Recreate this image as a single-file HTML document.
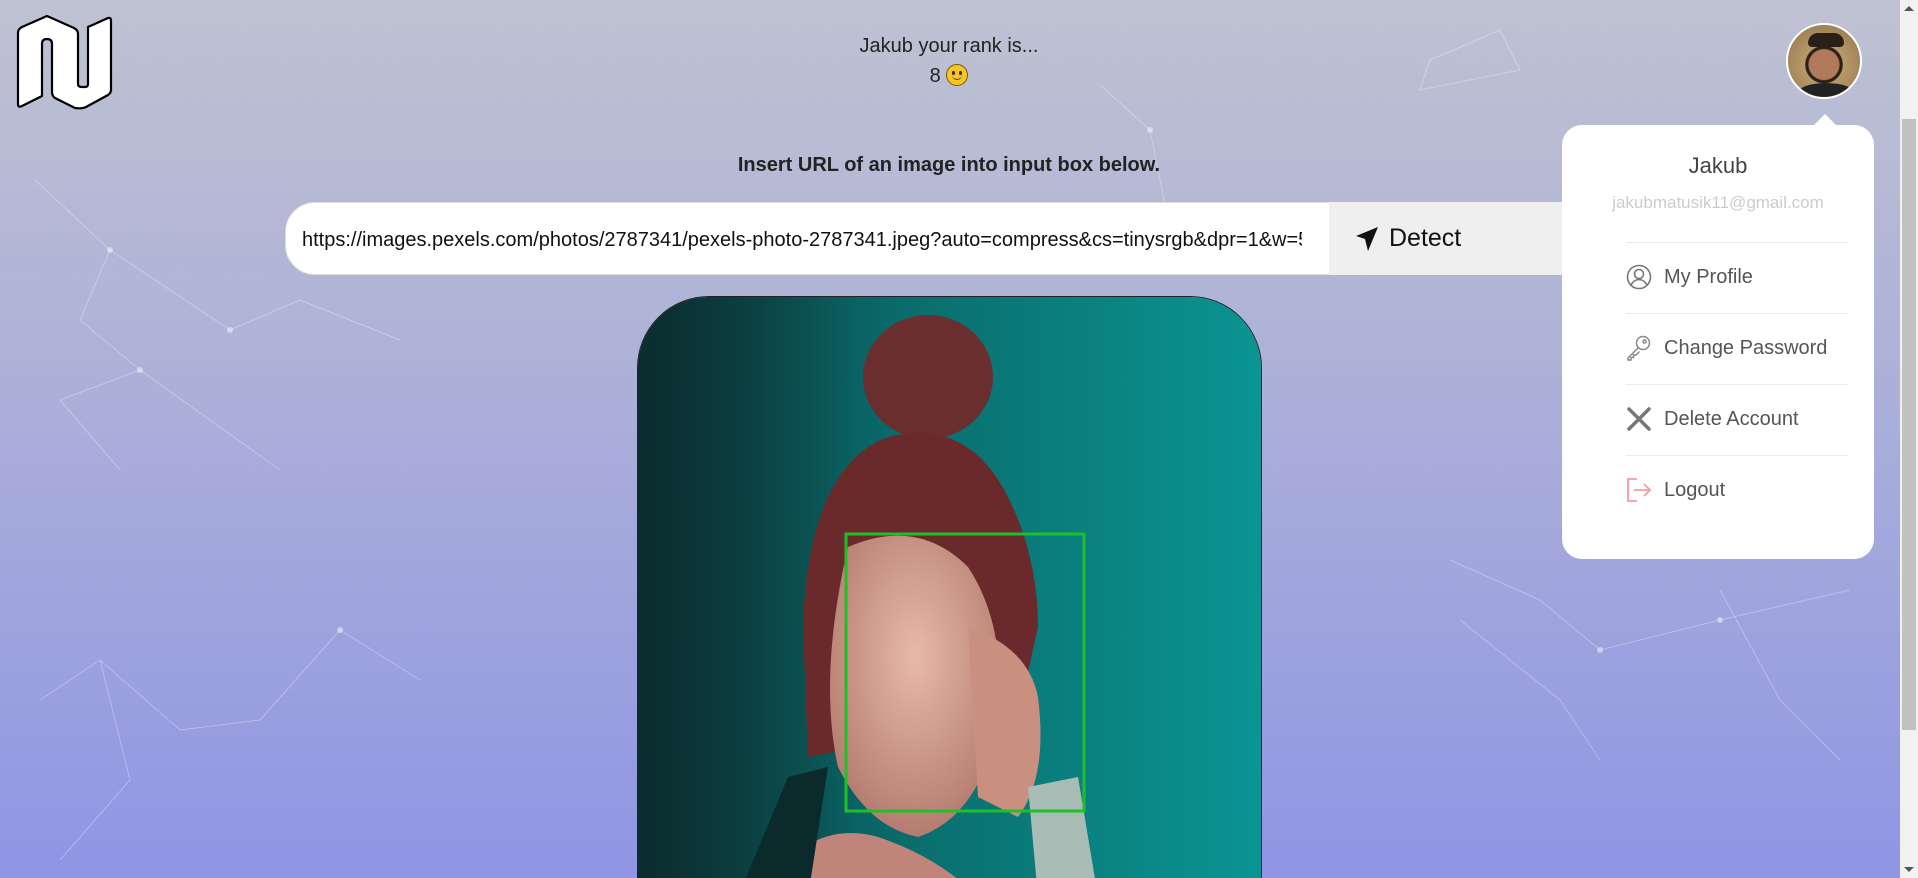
<!DOCTYPE html>
<html><head><meta charset="utf-8">
<style>
*{margin:0;padding:0;box-sizing:border-box}
html,body{width:1918px;height:878px;overflow:hidden}
body{font-family:"Liberation Sans",Arial,sans-serif;background:linear-gradient(180deg,#bec2d1 0%,#aeb2d8 40%,#8f95e4 100%);position:relative}
.abs{position:absolute}
.rank{left:0;width:1898px;text-align:center;color:#222;font-size:20px}
.hint{left:0;width:1898px;text-align:center;top:154px;font-weight:bold;font-size:20px;color:#222}
.input{left:285px;top:202px;width:1045px;height:73px;background:#fff;border-radius:30px 0 0 30px;font-size:20px;color:#111;border:1px solid #ddd}
.input div{position:absolute;left:16px;top:26px;width:1000px;white-space:nowrap;overflow:hidden}
.btn{left:1329px;top:202px;width:260px;height:73px;background:#efefef;font-size:25px;color:#111;padding:22px 0 0 60px}
.img{left:637px;top:296px;width:625px;height:600px;border-radius:72px 72px 0 0;overflow:hidden;border:1px solid #222}
.dd{left:1562px;top:125px;width:312px;height:434px;background:#fff;border-radius:20px}
.dd .name{position:absolute;top:28px;width:100%;text-align:center;font-size:22px;color:#444}
.dd .mail{position:absolute;top:68px;width:100%;text-align:center;font-size:17px;color:#ccc}
.line{position:absolute;left:64px;width:222px;height:1px;background:#eaeaea}
.item{position:absolute;left:64px;font-size:20px;color:#555;display:flex;align-items:center}
.item svg{margin-right:12px}
.sb{left:1900px;top:0;width:18px;height:878px;background:#f1f1f1}
.thumb{left:1902px;top:119px;width:14px;height:611px;background:#c1c1c1}
</style></head><body>
<svg class="abs" style="left:0;top:0" width="1900" height="878">
<g stroke="rgba(255,255,255,0.3)" stroke-width="1" fill="none">
<path d="M35 180L110 250L80 320L140 370L60 400M110 250L230 330L300 300L400 340M140 370L210 420L280 470M60 400L120 470M1430 60L1500 30L1520 70L1420 90ZM1100 85L1150 130L1170 230L1280 260M1450 560L1540 600L1600 650L1720 620L1850 590M1460 620L1560 700L1600 760M40 700L100 660L180 730L260 720L340 630L420 680M100 660L130 780L60 860M1720 590L1780 700L1840 760"/>
</g>
<g fill="rgba(255,255,255,0.45)"><circle cx="110" cy="250" r="3"/><circle cx="230" cy="330" r="3"/><circle cx="140" cy="370" r="3"/><circle cx="1150" cy="130" r="3"/><circle cx="340" cy="630" r="3"/><circle cx="1720" cy="620" r="3"/><circle cx="1600" cy="650" r="3"/></g>
</svg>
<svg class="abs" style="left:0;top:0" width="120" height="115" viewBox="0 0 120 115">
<path d="M18 104L18 33Q18 29 22 27L47 16L74 28Q78 30 78 34L78 84Q78 87 82 87L85 87Q88 87 88 84L88 27L108 18Q111 17 111 21L111 90Q111 93 108 95L86 107Q82 109 75 108L55 98Q52 96 52 92L52 44Q52 39 47 39Q42 39 42 44L42 96L22 106Q18 108 18 104Z" fill="#fff" stroke="#000" stroke-width="2.2" stroke-linejoin="round"/>
</svg>
<div class="abs rank" style="top:35px">Jakub your rank is...</div>
<div class="abs rank" style="top:64px">8 <span style="display:inline-block;width:22px;height:22px;border-radius:50%;background:#f7c325;border:1.5px solid #7a5a00;vertical-align:-4px;position:relative"><span style="position:absolute;left:5px;top:6px;width:3px;height:4px;background:#333;border-radius:2px"></span><span style="position:absolute;left:12px;top:6px;width:3px;height:4px;background:#333;border-radius:2px"></span><span style="position:absolute;left:5px;top:10px;width:10px;height:5px;border-bottom:1.5px solid #333;border-radius:0 0 6px 6px"></span></span></div>
<div class="abs hint">Insert URL of an image into input box below.</div>
<div class="abs input"><div>https://images.pexels.com/photos/2787341/pexels-photo-2787341.jpeg?auto=compress&amp;cs=tinysrgb&amp;dpr=1&amp;w=500</div></div>
<div class="abs btn"><svg class="abs" style="left:26px;top:24px" width="24" height="26" viewBox="0 0 24 26"><path d="M23 1L1 10L10 13L13 25Z" fill="#111"/></svg>Detect</div>
<div class="abs img">
<svg width="625" height="600" viewBox="0 0 625 600">
<defs><linearGradient id="bg" x1="0" x2="1" y1="0" y2="0"><stop offset="0" stop-color="#0c3a3c"/><stop offset="0.45" stop-color="#0a6e6e"/><stop offset="1" stop-color="#0a9593"/></linearGradient>
<radialGradient id="sk" cx="0.5" cy="0.4" r="0.6"><stop offset="0" stop-color="#e8b9a8"/><stop offset="1" stop-color="#b47c70"/></radialGradient>
<linearGradient id="dk" x1="0" x2="1"><stop offset="0" stop-color="#0b2a2c"/><stop offset="1" stop-color="#0b2a2c" stop-opacity="0"/></linearGradient></defs>
<rect width="625" height="600" fill="url(#bg)"/>
<rect x="0" y="0" width="220" height="600" fill="url(#dk)" opacity="0.8"/>
<ellipse cx="290" cy="80" rx="65" ry="62" fill="#6b2e2e"/>
<path d="M165 330Q170 170 250 140Q330 120 370 200Q400 260 400 330L380 420L170 460Z" fill="#6a2a2c"/>
<path d="M210 250Q280 220 330 270Q370 330 360 430Q340 520 280 540Q230 530 200 470Q180 380 210 250Z" fill="url(#sk)"/>
<path d="M330 330Q390 350 400 400Q410 480 380 520L340 500Z" fill="#c99080"/>
<path d="M390 490L440 480L460 600L400 600Z" fill="#a9bdb6"/>
<path d="M120 600Q170 520 240 540Q300 560 340 600Z" fill="#c0857a"/>
<path d="M100 600L150 480L190 470L170 600Z" fill="#0b2a2c"/>
<rect x="208" y="237" width="238" height="277" fill="none" stroke="#1fbf2a" stroke-width="3"/>
</svg>
</div>
<div class="abs" style="left:1786px;top:23px;width:76px;height:76px;border-radius:50%;border:2px solid #fff;background:radial-gradient(circle at 50% 55%,#b07a5a 0 28%,#2b2018 30% 34%,#b89a6a 36%,#8d7048 100%);overflow:hidden"><div style="position:absolute;left:20px;top:8px;width:36px;height:14px;background:#2b2018;border-radius:10px 10px 4px 4px"></div><div style="position:absolute;left:10px;top:58px;width:56px;height:20px;background:#222;border-radius:50% 50% 0 0"></div></div>
<div class="abs" style="left:1813px;top:114px;width:0;height:0;border-left:12px solid transparent;border-right:12px solid transparent;border-bottom:12px solid #fff"></div>
<div class="abs dd">
<div class="name">Jakub</div>
<div class="mail">jakubmatusik11@gmail.com</div>
<div class="line" style="top:117px"></div>
<div class="line" style="top:188px"></div>
<div class="line" style="top:259px"></div>
<div class="line" style="top:330px"></div>
<div class="item" style="top:139px"><svg width="26" height="26" viewBox="0 0 26 26" fill="none" stroke="#777" stroke-width="1.6"><circle cx="13" cy="13" r="11.5"/><circle cx="13" cy="10" r="4.5"/><path d="M5 21Q8 15.5 13 15.5Q18 15.5 21 21"/></svg>My Profile</div>
<div class="item" style="top:210px"><svg width="26" height="26" viewBox="0 0 26 26" fill="none" stroke="#888" stroke-width="1.5"><circle cx="17" cy="8" r="6.5"/><circle cx="18.5" cy="6.5" r="1.5"/><path d="M12.5 12.5L2 23V25H5V22.5H7.5V20H10L13.5 16.5"/></svg>Change Password</div>
<div class="item" style="top:281px"><svg width="26" height="26" viewBox="0 0 26 26" stroke="#777" stroke-width="3.5" stroke-linecap="round"><path d="M3 3L23 23M23 3L3 23"/></svg>Delete Account</div>
<div class="item" style="top:352px"><svg width="26" height="26" viewBox="0 0 26 26" fill="none" stroke="#f49b9f" stroke-width="1.8"><path d="M11 2H2V24H11"/><path d="M8 13H24M18 7L24 13L18 19"/></svg>Logout</div>
</div>
<div class="abs sb"></div>
<div class="abs thumb"></div>
<div class="abs" style="left:1904px;top:6px;width:0;height:0;border-left:5px solid transparent;border-right:5px solid transparent;border-bottom:5px solid #555"></div>
<div class="abs" style="left:1904px;top:867px;width:0;height:0;border-left:5px solid transparent;border-right:5px solid transparent;border-top:5px solid #555"></div>
</body></html>
